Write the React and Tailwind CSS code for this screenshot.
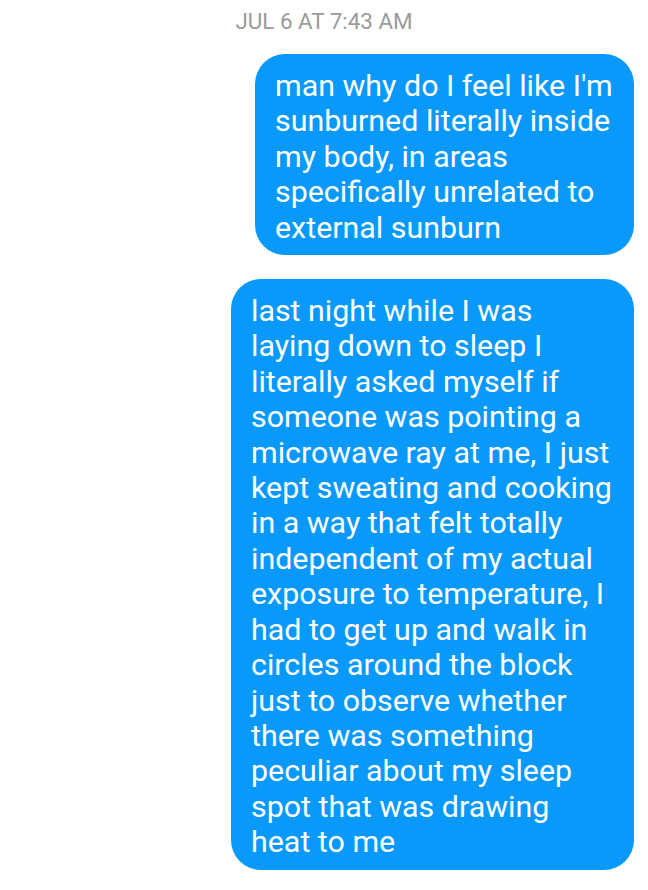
import React from "react";

const m1 = [
  "man why do I feel like I'm",
  "sunburned literally inside",
  "my body, in areas",
  "specifically unrelated to",
  "external sunburn",
];
const m2 = [
  "last night while I was",
  "laying down to sleep I",
  "literally asked myself if",
  "someone was pointing a",
  "microwave ray at me, I just",
  "kept sweating and cooking",
  "in a way that felt totally",
  "independent of my actual",
  "exposure to temperature, I",
  "had to get up and walk in",
  "circles around the block",
  "just to observe whether",
  "there was something",
  "peculiar about my sleep",
  "spot that was drawing",
  "heat to me",
];

function Bubble({ lines, w }) {
  return (
    <div
      className={`bg-[#0899fb] text-white rounded-[30px] pl-[20px] pr-[10px] pt-[14px] pb-[10px] text-[30.4px] leading-[35.4px] ${w}`}
    >
      {lines.map((l, i) => (
        <div key={i} className="whitespace-nowrap">
          {l}
        </div>
      ))}
    </div>
  );
}

export default function App() {
  return (
    <div
      className="w-[648px] h-[890px] bg-white overflow-hidden"
      style={{ fontFamily: "Roboto, 'Noto Sans', sans-serif" }}
    >
      <div className="h-[44px] flex items-center justify-center text-[22.4px] text-[#9b9b9b]">
        JUL 6 AT 7:43 AM
      </div>
      <div className="flex flex-col items-end pr-[14px] gap-[24px] mt-[10px]">
        <Bubble lines={m1} w="w-[379px]" />
        <Bubble lines={m2} w="w-[403px]" />
      </div>
    </div>
  );
}
